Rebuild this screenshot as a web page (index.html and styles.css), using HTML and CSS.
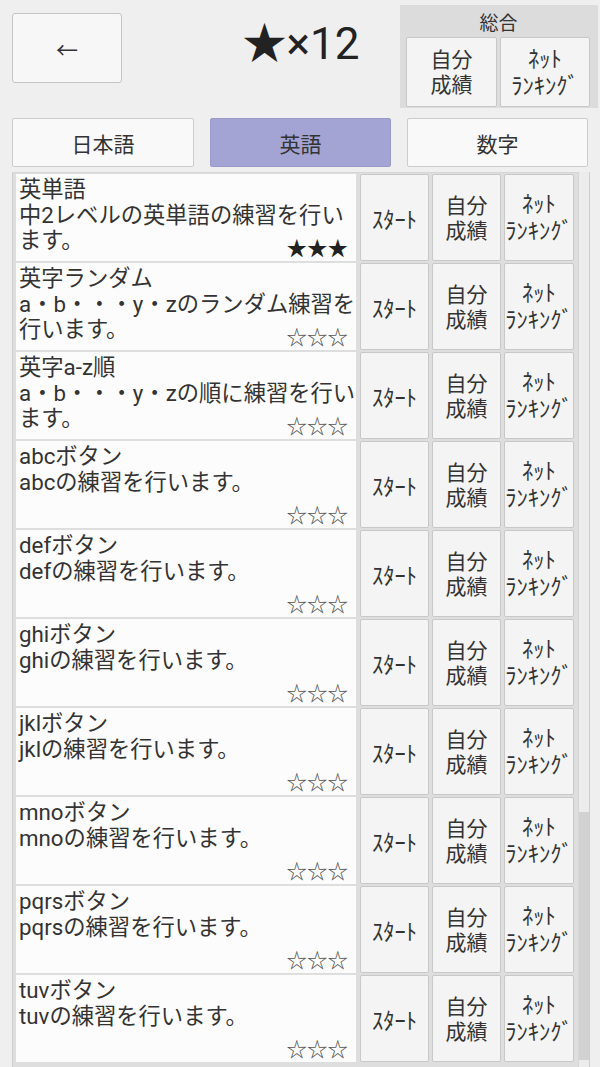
FILE: index.html
```html
<!DOCTYPE html>
<html lang="ja">
<head>
<meta charset="utf-8">
<link rel="stylesheet" href="styles.css">
</head>
<body>
<div class="header">
  <div class="hcol-left"><div class="back">←</div></div>
  <div class="title">★×12</div>
  <div class="panel">
    <div class="panel-label">総合</div>
    <div class="panel-btns">
      <div class="pbtn mine">自分<br>成績</div>
      <div class="pbtn net">ﾈｯﾄ<br>ﾗﾝｷﾝｸﾞ</div>
    </div>
  </div>
</div>
<div class="tabs">
  <div class="tab">日本語</div>
  <div class="tab active">英語</div>
  <div class="tab">数字</div>
</div>
<div class="list">
  <div class="rows">
    <div class="row">
      <div class="desc"><div class="text">英単語<br>中2レベルの英単語の練習を行います。</div><div class="stars filled">★★★</div></div>
      <div class="btn start">ｽﾀｰﾄ</div><div class="btn mine">自分<br>成績</div><div class="btn net">ﾈｯﾄ<br>ﾗﾝｷﾝｸﾞ</div>
    </div>
    <div class="row">
      <div class="desc"><div class="text">英字ランダム<br>a・b・・・y・zのランダム練習を行います。</div><div class="stars">☆☆☆</div></div>
      <div class="btn start">ｽﾀｰﾄ</div><div class="btn mine">自分<br>成績</div><div class="btn net">ﾈｯﾄ<br>ﾗﾝｷﾝｸﾞ</div>
    </div>
    <div class="row">
      <div class="desc"><div class="text">英字a-z順<br>a・b・・・y・zの順に練習を行います。</div><div class="stars">☆☆☆</div></div>
      <div class="btn start">ｽﾀｰﾄ</div><div class="btn mine">自分<br>成績</div><div class="btn net">ﾈｯﾄ<br>ﾗﾝｷﾝｸﾞ</div>
    </div>
    <div class="row">
      <div class="desc"><div class="text">abcボタン<br>abcの練習を行います。</div><div class="stars">☆☆☆</div></div>
      <div class="btn start">ｽﾀｰﾄ</div><div class="btn mine">自分<br>成績</div><div class="btn net">ﾈｯﾄ<br>ﾗﾝｷﾝｸﾞ</div>
    </div>
    <div class="row">
      <div class="desc"><div class="text">defボタン<br>defの練習を行います。</div><div class="stars">☆☆☆</div></div>
      <div class="btn start">ｽﾀｰﾄ</div><div class="btn mine">自分<br>成績</div><div class="btn net">ﾈｯﾄ<br>ﾗﾝｷﾝｸﾞ</div>
    </div>
    <div class="row">
      <div class="desc"><div class="text">ghiボタン<br>ghiの練習を行います。</div><div class="stars">☆☆☆</div></div>
      <div class="btn start">ｽﾀｰﾄ</div><div class="btn mine">自分<br>成績</div><div class="btn net">ﾈｯﾄ<br>ﾗﾝｷﾝｸﾞ</div>
    </div>
    <div class="row">
      <div class="desc"><div class="text">jklボタン<br>jklの練習を行います。</div><div class="stars">☆☆☆</div></div>
      <div class="btn start">ｽﾀｰﾄ</div><div class="btn mine">自分<br>成績</div><div class="btn net">ﾈｯﾄ<br>ﾗﾝｷﾝｸﾞ</div>
    </div>
    <div class="row">
      <div class="desc"><div class="text">mnoボタン<br>mnoの練習を行います。</div><div class="stars">☆☆☆</div></div>
      <div class="btn start">ｽﾀｰﾄ</div><div class="btn mine">自分<br>成績</div><div class="btn net">ﾈｯﾄ<br>ﾗﾝｷﾝｸﾞ</div>
    </div>
    <div class="row">
      <div class="desc"><div class="text">pqrsボタン<br>pqrsの練習を行います。</div><div class="stars">☆☆☆</div></div>
      <div class="btn start">ｽﾀｰﾄ</div><div class="btn mine">自分<br>成績</div><div class="btn net">ﾈｯﾄ<br>ﾗﾝｷﾝｸﾞ</div>
    </div>
    <div class="row">
      <div class="desc"><div class="text">tuvボタン<br>tuvの練習を行います。</div><div class="stars">☆☆☆</div></div>
      <div class="btn start">ｽﾀｰﾄ</div><div class="btn mine">自分<br>成績</div><div class="btn net">ﾈｯﾄ<br>ﾗﾝｷﾝｸﾞ</div>
    </div>
  </div>
  <div class="scrollbar"><div class="thumb"></div></div>
</div>
</body>
</html>
```
FILE: styles.css
```css
html, body {
  margin: 0;
  padding: 0;
}
body {
  width: 600px;
  height: 1067px;
  overflow: hidden;
  background: #efefef;
  font-family: Roboto, "Noto Sans CJK JP", sans-serif;
  color: #333;
}
.header {
  display: grid;
  grid-template-columns: 200px 200px 200px;
  height: 110px;
}
.back {
  box-sizing: border-box;
  margin: 13px 0 0 12px;
  width: 110px;
  height: 70px;
  background: #f7f7f7;
  border: 1px solid #c4c4c4;
  border-radius: 3px;
  display: flex;
  align-items: center;
  justify-content: center;
  font-size: 22px;
  color: #333;
}
.title {
  display: flex;
  align-items: center;
  justify-content: center;
  font-size: 44px;
  color: #222;
  padding-bottom: 30px;
  padding-left: 2px;
}
.panel {
  box-sizing: border-box;
  margin-top: 5px;
  width: 198px;
  height: 103px;
  background: #dcdcdc;
  padding: 0 7px 0 6px;
  display: flex;
  flex-direction: column;
}
.panel-label {
  height: 32px;
  display: flex;
  align-items: center;
  justify-content: center;
  font-size: 19px;
  color: #333;
}
.panel-btns {
  display: grid;
  grid-template-columns: 91px 90px;
  gap: 3px;
  height: 70px;
}
.pbtn, .btn {
  box-sizing: border-box;
  background: #f4f4f4;
  border: 1px solid #c8c8c8;
  border-radius: 2px;
  display: flex;
  align-items: center;
  justify-content: center;
  text-align: center;
  color: #333;
}
.mine {
  font-size: 21px;
  line-height: 25px;
  padding-top: 2px;
}
.net {
  font-size: 22.5px;
  line-height: 27px;
  padding-top: 1px;
}
.start {
  font-size: 22.5px;
}
.tabs {
  display: grid;
  grid-template-columns: 182px 181px 181px;
  gap: 16px;
  padding: 0 12px;
  margin-top: 8px;
  height: 49px;
}
.tab {
  box-sizing: border-box;
  background: #f9f9f9;
  border: 1px solid #cccccc;
  border-radius: 2px;
  display: flex;
  align-items: center;
  justify-content: center;
  font-size: 21px;
  color: #333;
}
.tab.active {
  background: #a4a4d4;
  border-color: #9a9ac9;
}
.list {
  display: flex;
  margin: 5px 0 0 12px;
  width: 578px;
  height: 895px;
  overflow: hidden;
}
.rows {
  box-sizing: border-box;
  width: 566px;
  border-left: 1px solid #cfcfcf;
  border-top: 1px solid #d6d6d6;
  background: #dedede;
  padding: 1px 3px 0 3px;
}
.row {
  display: grid;
  grid-template-columns: 340px 70px 69px 70px;
  column-gap: 3px;
  height: 87px;
  margin-bottom: 2px;
}
.row .desc {
  margin-right: 1px;
}
.row .btn.start {
  margin-left: 1px;
}
.desc {
  display: grid;
  background: #fcfcfc;
  padding: 3px 0 0 3px;
  box-sizing: border-box;
  width: 340px;
}
.text, .stars {
  grid-area: 1 / 1;
}
.text {
  font-size: 22.3px;
  line-height: 25.5px;
  color: #333;
}
.stars {
  align-self: end;
  justify-self: end;
  font-family: "Noto Sans CJK JP", sans-serif;
  font-size: 20.5px;
  line-height: 22px;
  color: #555;
  margin: 0 8px 3px 0;
}
.stars.filled {
  color: #222;
}
.scrollbar {
  width: 12px;
  box-sizing: border-box;
  background: #ececec;
  border-right: 1px solid #cfcfcf;
  border-left: 1px solid #d6d6d6;
}
.thumb {
  margin-top: 640px;
  width: 10px;
  height: 248px;
  background: #d2d2d2;
}
```
